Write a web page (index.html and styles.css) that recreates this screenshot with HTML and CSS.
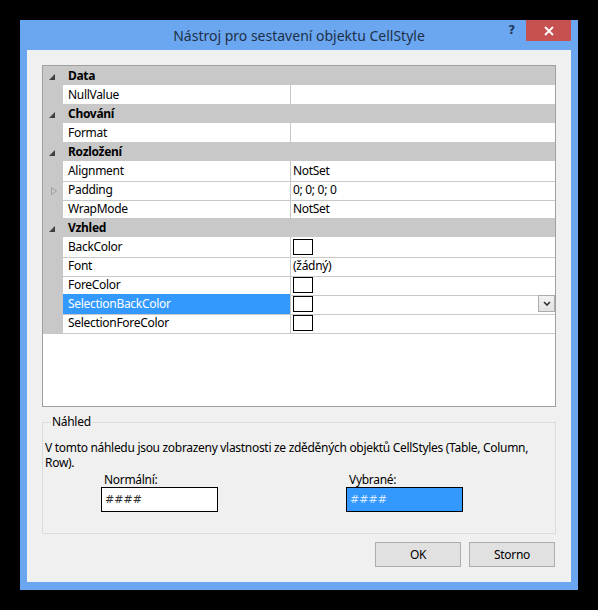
FILE: index.html
```html
<!DOCTYPE html>
<html lang="cs">
<head>
<meta charset="utf-8">
<title>Nástroj pro sestavení objektu CellStyle</title>
<link rel="stylesheet" href="styles.css">
</head>
<body>
<div class="window">
  <div class="titlebar">
    <div class="tb-side"></div>
    <div class="title">Nástroj pro sestavení objektu CellStyle</div>
    <div class="tb-side tb-controls">
      <span class="help">?</span>
      <span class="close"><svg width="10" height="10" viewBox="0 0 10 10"><path d="M1 1L9 9M9 1L1 9" stroke="#fff" stroke-width="1.8" fill="none"/></svg></span>
    </div>
  </div>
  <div class="client">
    <div class="pgrid">
      <div class="row cat"><span class="glyph"><svg width="6" height="6" viewBox="0 0 6 6"><polygon points="6,0 6,6 0,6" fill="#404040"/></svg></span><span class="catname">Data</span></div>
      <div class="row prop"><span class="margin"></span><span class="name">NullValue</span><span class="value"></span></div>
      <div class="row cat"><span class="glyph"><svg width="6" height="6" viewBox="0 0 6 6"><polygon points="6,0 6,6 0,6" fill="#404040"/></svg></span><span class="catname">Chování</span></div>
      <div class="row prop"><span class="margin"></span><span class="name">Format</span><span class="value"></span></div>
      <div class="row cat"><span class="glyph"><svg width="6" height="6" viewBox="0 0 6 6"><polygon points="6,0 6,6 0,6" fill="#404040"/></svg></span><span class="catname">Rozložení</span></div>
      <div class="row prop"><span class="margin"></span><span class="name">Alignment</span><span class="value">NotSet</span></div>
      <div class="row prop"><span class="margin"><svg class="expand" width="6" height="8" viewBox="0 0 6 8"><polygon points="0.5,0.5 5.5,4 0.5,7.5" fill="none" stroke="#a0a0a0" stroke-width="1"/></svg></span><span class="name">Padding</span><span class="value">0; 0; 0; 0</span></div>
      <div class="row prop"><span class="margin"></span><span class="name">WrapMode</span><span class="value">NotSet</span></div>
      <div class="row cat"><span class="glyph"><svg width="6" height="6" viewBox="0 0 6 6"><polygon points="6,0 6,6 0,6" fill="#404040"/></svg></span><span class="catname">Vzhled</span></div>
      <div class="row prop"><span class="margin"></span><span class="name">BackColor</span><span class="value"><span class="swatch"></span></span></div>
      <div class="row prop"><span class="margin"></span><span class="name">Font</span><span class="value">(žádný)</span></div>
      <div class="row prop"><span class="margin"></span><span class="name">ForeColor</span><span class="value"><span class="swatch"></span></span></div>
      <div class="row prop selected"><span class="margin"></span><span class="name">SelectionBackColor</span><span class="value"><span class="swatch"></span><span class="ddbtn"><svg width="8" height="5" viewBox="0 0 8 5"><path d="M1 1L4 4L7 1" stroke="#303030" stroke-width="1.6" fill="none"/></svg></span></span></div>
      <div class="row prop"><span class="margin"></span><span class="name">SelectionForeColor</span><span class="value"><span class="swatch"></span></span></div>
    </div>
    <fieldset class="group">
      <legend>Náhled</legend>
      <p class="desc">V tomto náhledu jsou zobrazeny vlastnosti ze zděděných objektů CellStyles (Table, Column, Row).</p>
      <div class="samples">
        <div class="sample normal">
          <div class="slabel">Normální:</div>
          <div class="sbox">####</div>
        </div>
        <div class="sample sel">
          <div class="slabel">Vybrané:</div>
          <div class="sbox">####</div>
        </div>
      </div>
    </fieldset>
    <div class="buttons">
      <button class="btn">OK</button>
      <button class="btn">Storno</button>
    </div>
  </div>
</div>
</body>
</html>
```
FILE: styles.css
```css
html, body {
  margin: 0;
  background: #000;
}
body {
  padding: 20px 0 0 20px;
  font-family: "Noto Sans", "Open Sans", sans-serif;
  font-size: 12px;
  letter-spacing: -0.3px;
  color: #000;
}
.window {
  width: 558px;
  height: 570px;
  background: #6ba7f0;
  display: flex;
  flex-direction: column;
}
.titlebar {
  height: 30px;
  display: grid;
  grid-template-columns: 1fr auto 1fr;
  align-items: start;
}
.title {
  font-size: 14px;
  letter-spacing: 0;
  color: #1e3048;
  line-height: 32px;
}
.tb-controls {
  display: flex;
  justify-content: flex-end;
  align-items: center;
  padding-right: 7px;
}
.help {
  font-family: "DejaVu Sans", sans-serif;
  font-weight: bold;
  font-size: 12px;
  color: #1e3a60;
  margin-right: 11px;
  line-height: 21px;
}
.close {
  width: 45px;
  height: 21px;
  background: #c75050;
  display: flex;
  align-items: center;
  justify-content: center;
}
.client {
  flex: 1;
  margin: 0 7px 8px 7px;
  background: #f0f0f0;
  padding: 15px;
  display: flex;
  flex-direction: column;
}
.pgrid {
  height: 340px;
  border: 1px solid #a0a0a0;
  background: #fff;
  display: flex;
  flex-direction: column;
}
.row {
  height: 19px;
  flex: none;
  display: grid;
  grid-template-columns: 20px 227px 1fr;
  box-sizing: border-box;
  line-height: 20px;
}
.cat {
  background: #c8c8c8;
  font-weight: bold;
}
.glyph {
  display: flex;
  align-items: center;
  justify-content: center;
  padding: 2px 2px 0 0;
}
.catname {
  padding-left: 5px;
  grid-column: 2 / 4;
}
.prop .margin {
  background: #c8c8c8;
  display: flex;
  align-items: center;
  justify-content: center;
}
.prop .name {
  padding-left: 5px;
  border-bottom: 1px solid #c8c8c8;
  white-space: nowrap;
}
.prop .value {
  border-left: 1px solid #c8c8c8;
  border-bottom: 1px solid #c8c8c8;
  padding-left: 2px;
  display: flex;
  align-items: center;
  position: relative;
}
.expand {
  margin-left: 2px;
}
.selected .name {
  background: #3399ff;
  color: #fff;
}
.swatch {
  width: 18px;
  height: 14px;
  border: 1px solid #000;
  background: #fff;
}
.ddbtn {
  position: absolute;
  right: 0;
  top: 1px;
  width: 15px;
  height: 15px;
  border: 1px solid #acacac;
  background: linear-gradient(#f2f2f2, #e2e2e2);
  display: flex;
  align-items: center;
  justify-content: center;
}
.group {
  margin: 8px 0 0 0;
  height: 119px;
  box-sizing: border-box;
  border: 1px solid #dcdcdc;
  padding: 0 2px;
  min-width: 0;
}
.group legend {
  padding: 0 1px;
  margin-left: 6px;
  line-height: 14px;
}
.desc {
  margin: 11px 0 0 0;
  line-height: 15px;
}
.samples {
  display: flex;
  margin-top: 2px;
}
.sample {
  display: flex;
  flex-direction: column;
}
.normal {
  margin-left: 56px;
}
.sel {
  margin-left: 128px;
}
.slabel {
  padding-left: 3px;
  line-height: 15px;
}
.sbox {
  height: 23px;
  border: 1px solid #000;
  background: #fff;
  font-size: 11px;
  letter-spacing: 0;
  line-height: 23px;
  padding-left: 3px;
  box-sizing: content-box;
  width: 112px;
  color: #303030;
  font-family: "DejaVu Sans", sans-serif;
}
.sel .sbox {
  background: #3399ff;
  color: #d8e8ff;
}
.buttons {
  margin-top: 8px;
  display: flex;
  justify-content: flex-end;
  gap: 8px;
  padding-right: 1px;
}
.btn {
  width: 86px;
  height: 25px;
  border: 1px solid #adadad;
  background: #e1e1e1;
  font-family: "Noto Sans", "Open Sans", sans-serif;
  font-size: 12px;
  letter-spacing: -0.3px;
  color: #000;
  padding: 0;
}
```
